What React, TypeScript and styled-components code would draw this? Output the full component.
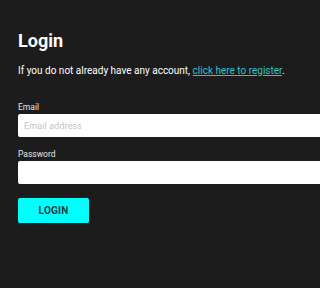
import styled, { createGlobalStyle } from "styled-components";

const GlobalStyle = createGlobalStyle`
  html, body {
    margin: 0;
    padding: 0;
    background: #1c1c1c;
    overflow: hidden;
  }
  body {
    font-family: Roboto, "Liberation Sans", sans-serif;
    color: #ffffff;
  }
`;

const Page = styled.div`
  display: flex;
  flex-direction: column;
  box-sizing: border-box;
  width: 100vw;
  height: 100vh;
  overflow: hidden;
  padding: 30px 0 0 18px;
`;

const Title = styled.h1`
  margin: 0;
  font-size: 18px;
  font-weight: 700;
  line-height: 22px;
`;

const Intro = styled.p`
  margin: 12px 0 0;
  font-size: 10px;
  line-height: 14px;
  white-space: nowrap;
`;

const RegisterLink = styled.a`
  color: #2cc3cb;
  text-decoration: underline;
`;

const Form = styled.form`
  display: flex;
  flex-direction: column;
  width: 320px;
  flex-shrink: 0;
  margin-top: 24px;
`;

const Field = styled.div`
  display: flex;
  flex-direction: column;
  gap: 1px;
  margin-bottom: 12px;
`;

const Label = styled.label`
  font-size: 8.5px;
  line-height: 11px;
  color: #e6e6e6;
`;

const Input = styled.input`
  height: 23px;
  box-sizing: border-box;
  border: none;
  border-radius: 2px;
  background: #ffffff;
  padding: 0 6px;
  font-family: Roboto, "Liberation Sans", sans-serif;
  font-size: 9.2px;
  outline: none;

  &::placeholder {
    color: #c4c4c4;
  }
`;

const Button = styled.button`
  align-self: flex-start;
  margin-top: 2px;
  width: 71px;
  height: 25px;
  border: none;
  border-radius: 2px;
  background: #00ffff;
  color: #0e3a40;
  font-family: Roboto, "Liberation Sans", sans-serif;
  font-size: 10px;
  font-weight: 700;
  letter-spacing: 0.2px;
`;

const App = () => {
  return (
    <>
      <GlobalStyle />
      <Page>
        <Title>Login</Title>
        <Intro>
          If you do not already have any account,{" "}
          <RegisterLink href="#">click here to register</RegisterLink>.
        </Intro>
        <Form onSubmit={(e) => e.preventDefault()}>
          <Field>
            <Label>Email</Label>
            <Input type="email" placeholder="Email address" />
          </Field>
          <Field>
            <Label>Password</Label>
            <Input type="password" />
          </Field>
          <Button type="submit">LOGIN</Button>
        </Form>
      </Page>
    </>
  );
};

export default App;
